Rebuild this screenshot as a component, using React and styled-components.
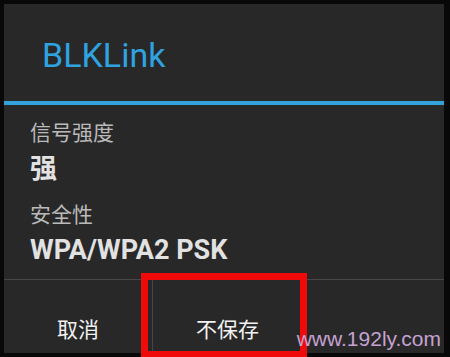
import React from 'react';
import styled, { createGlobalStyle } from 'styled-components';

const Global = createGlobalStyle`
  html, body {
    margin: 0;
    padding: 0;
    background: #080808;
  }
  body {
    width: 450px;
    height: 357px;
    overflow: hidden;
    font-family: Roboto, "Noto Sans CJK SC", sans-serif;
  }
`;

const Screen = styled.div`
  position: relative;
  width: 450px;
  height: 357px;
  padding: 4px 6px 4px 4px;
  box-sizing: border-box;
  background: #080808;
`;

const Dialog = styled.div`
  display: flex;
  flex-direction: column;
  height: 100%;
  background: #282828;
`;

const Header = styled.div`
  height: 101px;
  display: flex;
  align-items: center;
  padding-left: 38px;
  box-sizing: border-box;
  border-bottom: 4px solid #33a3dc;
`;

const Title = styled.h1`
  margin: 0;
  font-family: Roboto, sans-serif;
  font-weight: 400;
  font-size: 34px;
  color: #2fa3e0;
  padding-top: 4px;
`;

const Body = styled.div`
  flex: 1;
  padding: 15px 26px 0;
  display: flex;
  flex-direction: column;
`;

const Label = styled.div`
  font-size: 21px;
  line-height: 26px;
  color: #bababa;
  margin-top: ${p => p.$gap || 0}px;
`;

const Value = styled.div`
  font-family: Roboto, "Noto Sans CJK SC", sans-serif;
  font-weight: 700;
  font-size: 27px;
  line-height: 34px;
  color: #e2e2e2;
  margin-top: ${p => p.$gap || 0}px;
`;

const Buttons = styled.div`
  height: 73px;
  display: grid;
  grid-template-columns: 148px 150px 1fr;
  border-top: 1px solid #474747;
`;

const Button = styled.div`
  display: flex;
  align-items: center;
  justify-content: center;
  font-size: 21px;
  color: #f2f2f2;
  border-left: ${p => (p.$divider ? '1px solid #454545' : 'none')};
  padding-top: 22px;
`;

const Mark = styled.div`
  position: absolute;
  left: 141px;
  top: 273px;
  width: 166px;
  height: 85px;
  border: 7px solid #f00a0a;
  box-sizing: border-box;
`;

const Watermark = styled.div`
  position: absolute;
  right: 9px;
  bottom: 6px;
  font-family: "Liberation Sans", Arial, sans-serif;
  font-size: 21px;
  color: #c5a2d2;
`;

export default function App() {
  return (
    <>
      <Global />
      <Screen>
        <Dialog>
          <Header>
            <Title>BLKLink</Title>
          </Header>
          <Body>
            <Label>信号强度</Label>
            <Value $gap={6}>强</Value>
            <Label $gap={16}>安全性</Label>
            <Value $gap={5}>WPA/WPA2 PSK</Value>
          </Body>
          <Buttons>
            <Button>取消</Button>
            <Button $divider>不保存</Button>
            <Button $divider></Button>
          </Buttons>
        </Dialog>
        <Mark />
        <Watermark>www.192ly.com</Watermark>
      </Screen>
    </>
  );
}
